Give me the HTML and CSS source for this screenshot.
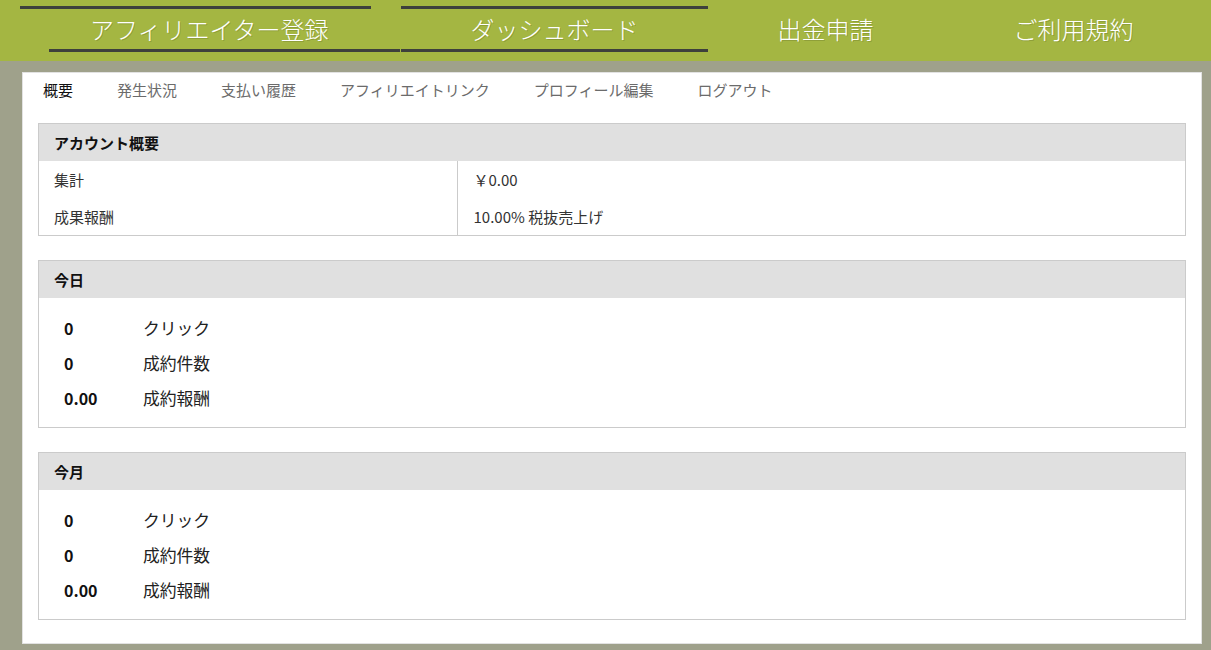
FILE: index.html
```html
<!DOCTYPE html>
<html lang="ja">
  <head>
    <meta charset="UTF-8" />
    <meta name="viewport" content="width=device-width, initial-scale=1.0" />
    <title>ダッシュボード</title>
    <link rel="stylesheet" href="styles.css">
  </head>
  <body>
    <header class="site-header">
      <nav class="site-nav">
        <a href="#" class="nav-item nav-sliding">アフィリエイター登録</a>
        <a href="#" class="nav-item nav-active">ダッシュボード</a>
        <a href="#" class="nav-item">出金申請</a>
        <a href="#" class="nav-item">ご利用規約</a>
      </nav>
    </header>

    <div class="panel">
      <ul class="tabs">
        <li class="tab tab-active">概要</li>
        <li class="tab">発生状況</li>
        <li class="tab">支払い履歴</li>
        <li class="tab">アフィリエイトリンク</li>
        <li class="tab">プロフィール編集</li>
        <li class="tab">ログアウト</li>
      </ul>

      <div class="box">
        <div class="box-title">アカウント概要</div>
        <table class="summary">
          <tr>
            <td class="summary-label">集計</td>
            <td>￥0.00</td>
          </tr>
          <tr>
            <td class="summary-label">成果報酬</td>
            <td>10.00% 税抜売上げ</td>
          </tr>
        </table>
      </div>

      <div class="box">
        <div class="box-title">今日</div>
        <div class="stats">
          <div class="stat"><span class="stat-num">0</span><span class="stat-label">クリック</span></div>
          <div class="stat"><span class="stat-num">0</span><span class="stat-label">成約件数</span></div>
          <div class="stat"><span class="stat-num">0.00</span><span class="stat-label">成約報酬</span></div>
        </div>
      </div>

      <div class="box">
        <div class="box-title">今月</div>
        <div class="stats">
          <div class="stat"><span class="stat-num">0</span><span class="stat-label">クリック</span></div>
          <div class="stat"><span class="stat-num">0</span><span class="stat-label">成約件数</span></div>
          <div class="stat"><span class="stat-num">0.00</span><span class="stat-label">成約報酬</span></div>
        </div>
      </div>
    </div>
  </body>
</html>
```

FILE: styles.css
```css
body {
  margin: 0;
  background-color: #9fa18b;
  font-family: "Noto Sans CJK JP", "Noto Sans", sans-serif;
}
.site-header {
  background-color: #a4b642;
  height: 61px;
  padding-left: 20px;
}
.site-nav {
  display: flex;
}
.nav-item {
  position: relative;
  display: block;
  margin-top: 6px;
  padding: 0 70px;
  height: 46px;
  line-height: 46px;
  font-size: 24px;
  font-weight: 300;
  color: #ffffff;
  text-decoration: none;
  text-shadow: 1px 1px 0 rgba(0, 0, 0, 0.15);
}
.nav-active::before,
.nav-active::after,
.nav-sliding::before,
.nav-sliding::after {
  content: "";
  position: absolute;
  left: 0;
  right: 0;
  height: 3px;
  background-color: #3d403c;
}
.nav-active::before,
.nav-sliding::before {
  top: 0;
}
.nav-active::after,
.nav-sliding::after {
  bottom: 0;
}
.nav-sliding {
  padding-right: 72px;
}
.nav-active {
  padding-right: 69px;
}
.nav-sliding::before {
  right: 30px;
}
.nav-sliding::after {
  left: 29px;
  right: 1px;
}
.panel {
  margin: 11px 9px 0 22px;
  padding: 0 15px 23px;
  background-color: #ffffff;
  border: 1px solid #e2e2e2;
}
.tabs {
  display: flex;
  gap: 44px;
  list-style: none;
  margin: 0 0 23px;
  padding: 7px 5px 0;
  font-size: 15px;
  line-height: 20px;
}
.tab {
  color: #6b6b6b;
}
.tab-active {
  color: #111111;
}
.box {
  border: 1px solid #cbcbcb;
  margin-bottom: 24px;
}
.box:last-child {
  margin-bottom: 0;
}
.box-title {
  background-color: #e0e0e0;
  height: 37px;
  line-height: 37px;
  padding-left: 15px;
  font-size: 15px;
  font-weight: bold;
  color: #111111;
}
.summary {
  width: 100%;
  border-collapse: collapse;
}
.summary td {
  height: 37px;
  padding: 0 16px;
  font-size: 15px;
  color: #333333;
}
.summary .summary-label {
  width: 418px;
  box-sizing: border-box;
  padding-left: 15px;
  border-right: 1px solid #cbcbcb;
}
.stats {
  padding: 12px 0;
}
.stat {
  display: flex;
  align-items: center;
  height: 35px;
}
.stat-num {
  width: 79px;
  padding-left: 25px;
  font-size: 16px;
  font-weight: bold;
  color: #111111;
}
.stat-label {
  font-size: 16.8px;
  color: #222222;
}
```
